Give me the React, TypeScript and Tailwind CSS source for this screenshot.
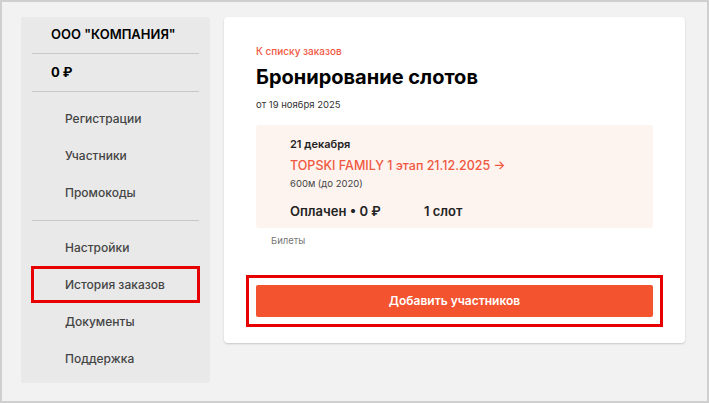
const MENU_TOP = ["Регистрации", "Участники", "Промокоды"];
const MENU_BOTTOM = ["Настройки", "История заказов", "Документы", "Поддержка"];

function Sidebar() {
  return (
    <aside className="w-[189px] shrink-0 self-start rounded-[3px] bg-[#e9e9e9] px-[11px] pb-[6px]">
      <div className="flex h-[37px] items-center border-b border-[#c8c8c8] pl-[19px] text-[13px] font-semibold text-black">
        ООО "КОМПАНИЯ"
      </div>
      <div className="flex h-[38px] items-center border-b border-[#c8c8c8] pl-[19px] text-[13px] font-bold text-black">
        0 ₽
      </div>
      <nav className="flex flex-col border-b border-[#c8c8c8] pt-[8px] pb-[9px]">
        {MENU_TOP.map((label) => (
          <a key={label} className="flex h-[37px] items-center pl-[33px] text-[12px] font-medium text-[#444]">
            {label}
          </a>
        ))}
      </nav>
      <nav className="flex flex-col pt-[8px]">
        {MENU_BOTTOM.map((label) => (
          <a
            key={label}
            className={
              label === "История заказов"
                ? "-mx-[1px] flex h-[37px] items-center border-[3px] border-[#e60000] pl-[31px] text-[12px] font-medium text-[#444]"
                : "flex h-[37px] items-center pl-[33px] text-[12px] font-medium text-[#444]"
            }
          >
            {label}
          </a>
        ))}
      </nav>
    </aside>
  );
}

function OrderCard() {
  return (
    <main className="w-[461px] shrink-0 self-start rounded-[4px] bg-white px-[32px] pt-[27px] pb-[16px] shadow-[0_1px_2px_rgba(0,0,0,0.18)]">
      <a className="block text-[10px] font-medium text-[#f0583f]">К списку заказов</a>
      <h1 className="mt-[5px] text-[20px] font-bold leading-[26px] text-black">Бронирование слотов</h1>
      <p className="mt-[8px] text-[9.5px] text-[#333]">от 19 ноября 2025</p>

      <section className="mt-[13px] rounded-[3px] bg-[#fdf3ef] px-[34px] pt-[11px] pb-[7px]">
        <div className="text-[11px] font-semibold text-[#222]">21 декабря</div>
        <a className="mt-[4px] block text-[12.5px] font-medium text-[#f0583f]">
          TOPSKI FAMILY 1 этап 21.12.2025 →
        </a>
        <div className="mt-[1px] text-[9.5px] text-[#444]">600м (до 2020)</div>
        <div className="mt-[11px] flex text-[13px] font-semibold text-[#222]">
          <span className="w-[134px]">Оплачен • 0 ₽</span>
          <span>1 слот</span>
        </div>
      </section>
      <div className="mt-[6px] pl-[15px] text-[9.5px] text-[#777]">Билеты</div>

      <div className="-mx-[10px] mt-[26px] border-[3px] border-[#e60000] p-[7px]">
        <button className="flex h-[32px] w-full items-center justify-center rounded-[2px] bg-[#f3532e] text-[12px] font-semibold text-white">
          Добавить участников
        </button>
      </div>
    </main>
  );
}

export default function App() {
  return (
    <div
      className="flex h-[403px] w-[709px] gap-[14px] border-2 border-[#cfcfcf] bg-[#f2f2f2] pt-[15px] pl-[19px]"
      style={{ fontFamily: "Inter, 'Noto Sans', sans-serif" }}
    >
      <Sidebar />
      <OrderCard />
    </div>
  );
}
